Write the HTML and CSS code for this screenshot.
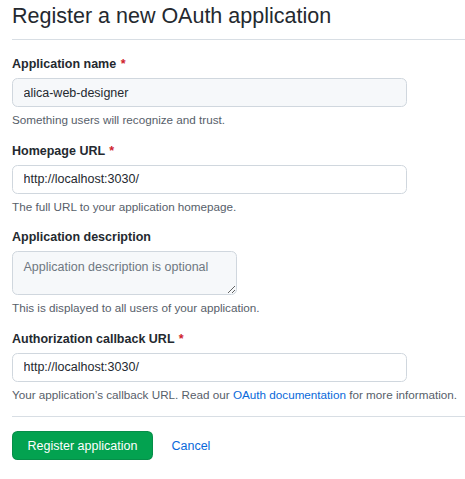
FILE: index.html
```html
<!DOCTYPE html>
<html lang="en">
<head>
<meta charset="utf-8">
<title>Register a new OAuth application</title>
<link rel="stylesheet" href="styles.css">
</head>
<body>
<div class="page">
  <div class="subhead">
    <h1 class="subhead-title">Register a new OAuth application</h1>
  </div>
  <form class="form">
    <div class="group">
      <label class="label">Application name <span class="req">*</span></label>
      <input class="input input-filled" type="text" value="alica-web-designer">
      <p class="note">Something users will recognize and trust.</p>
    </div>
    <div class="group">
      <label class="label">Homepage URL <span class="req">*</span></label>
      <input class="input" type="text" value="http://localhost:3030/">
      <p class="note">The full URL to your application homepage.</p>
    </div>
    <div class="group">
      <label class="label">Application description</label>
      <textarea class="textarea" placeholder="Application description is optional"></textarea>
      <p class="note">This is displayed to all users of your application.</p>
    </div>
    <div class="group">
      <label class="label">Authorization callback URL <span class="req">*</span></label>
      <input class="input" type="text" value="http://localhost:3030/">
      <p class="note">Your application’s callback URL. Read our <a class="link" href="#">OAuth documentation</a> for more information.</p>
    </div>
    <div class="actions">
      <button class="btn-primary" type="button">Register application</button>
      <a class="cancel" href="#">Cancel</a>
    </div>
  </form>
</div>
</body>
</html>
```
FILE: styles.css
```css
* { box-sizing: border-box; }
html, body {
  margin: 0;
  padding: 0;
  background: #ffffff;
}
body {
  font-family: "Liberation Sans", Arial, sans-serif;
  color: #24292f;
}
.page {
  padding: 0 0 0 12px;
}
.subhead {
  padding-bottom: 7px;
  border-bottom: 1px solid #d8dee4;
  margin-bottom: 15px;
}
.subhead-title {
  margin: 0;
  font-size: 21.5px;
  font-weight: 400;
  line-height: 32px;
  color: #24292f;
}
.form {
  margin: 0;
}
.group {
  display: flex;
  flex-direction: column;
  align-items: flex-start;
  margin-bottom: 13.5px;
}
.label {
  font-size: 12.5px;
  font-weight: 700;
  line-height: 18px;
  margin-bottom: 5px;
  color: #24292f;
}
.req {
  color: #cf222e;
  margin-left: 1px;
}
.input {
  width: 395px;
  height: 29px;
  padding: 0 10.5px;
  font-family: "Liberation Sans", Arial, sans-serif;
  font-size: 12.5px;
  color: #24292f;
  background: #ffffff;
  border: 1px solid #d0d7de;
  border-radius: 5.5px;
  outline: none;
}
.input-filled {
  background: #f6f8fa;
}
.textarea {
  width: 225px;
  height: 44px;
  padding: 6px 10.5px;
  font-family: "Liberation Sans", Arial, sans-serif;
  font-size: 12.5px;
  line-height: 18px;
  color: #24292f;
  background: #f6f8fa;
  border: 1px solid #d0d7de;
  border-radius: 5.5px;
  resize: both;
  outline: none;
}
.textarea::placeholder {
  color: #6e7781;
  opacity: 1;
}
.note {
  margin: 5px 0 0;
  font-size: 11.7px;
  line-height: 16px;
  color: #57606a;
}
.link {
  color: #0969da;
  text-decoration: none;
}
.actions {
  display: flex;
  align-items: center;
  border-top: 1px solid #d8dee4;
  padding-top: 14px;
  margin-top: 1px;
}
.btn-primary {
  height: 29px;
  padding: 0 14.6px;
  font-family: "Liberation Sans", Arial, sans-serif;
  font-size: 12.5px;
  color: #ffffff;
  background: #03a250;
  border: 1px solid rgba(27, 31, 36, 0.15);
  border-radius: 5.5px;
}
.cancel {
  margin-left: 18.5px;
  font-size: 12.5px;
  color: #0969da;
  text-decoration: none;
}
```
